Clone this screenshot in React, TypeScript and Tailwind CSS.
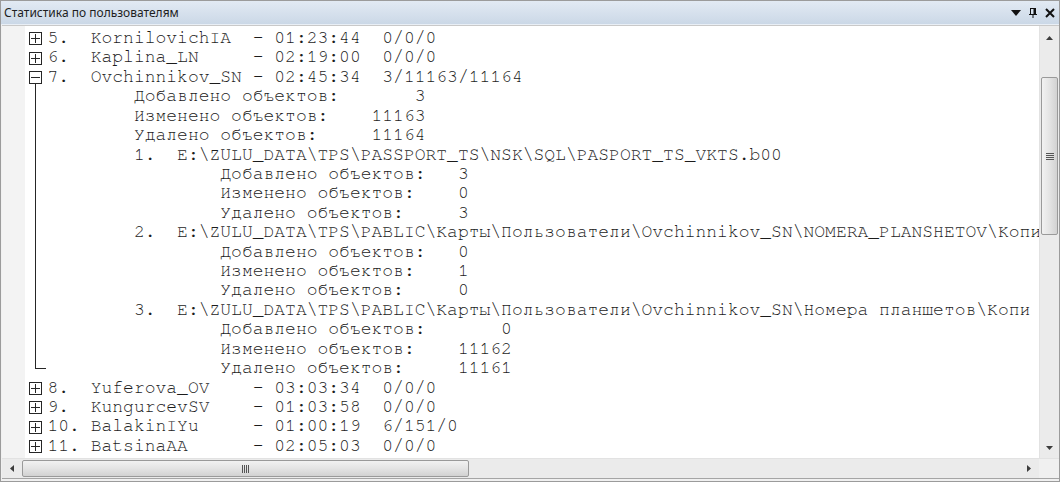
import React from "react";

function pad(label: string, value: string, width: number, indent: number) {
  return " ".repeat(indent) + label.padEnd(22, " ") + value.padStart(width, " ");
}

function head(num: string, name: string, time: string, stats: string) {
  return (num + ".").padEnd(4, " ") + name.padEnd(14, " ") + " - " + time + "  " + stats;
}

function Box({ open }: { open: boolean }) {
  return (
    <span className="relative block w-[13px] h-[13px] border border-[#262626] bg-white">
      <span className="absolute left-[1px] right-[1px] top-[5px] h-px bg-[#262626]" />
      {!open && <span className="absolute top-[1px] bottom-[1px] left-[5px] w-px bg-[#262626]" />}
    </span>
  );
}

function Row({ children, box }: { children: React.ReactNode; box?: React.ReactNode }) {
  return (
    <div className="flex h-[19.43px] items-center">
      <div className="w-[22.5px] shrink-0 flex items-center pl-[4px]">{box}</div>
      <span className="whitespace-pre">{children}</span>
    </div>
  );
}

const before = [
  head("5", "KornilovichIA", "01:23:44", "0/0/0"),
  head("6", "Kaplina_LN", "02:19:00", "0/0/0"),
];

const after = [
  head("8", "Yuferova_OV", "03:03:34", "0/0/0"),
  head("9", "KungurcevSV", "01:03:58", "0/0/0"),
  head("10", "BalakinIYu", "01:00:19", "6/151/0"),
  head("11", "BatsinaAA", "02:05:03", "0/0/0"),
];

const children: string[] = [
  pad("Добавлено объектов:", "3", 5, 8),
  pad("Изменено объектов:", "11163", 5, 8),
  pad("Удалено объектов:", "11164", 5, 8),
  "        1.  E:\\ZULU_DATA\\TPS\\PASSPORT_TS\\NSK\\SQL\\PASPORT_TS_VKTS.b00",
  pad("Добавлено объектов:", "3", 1, 16),
  pad("Изменено объектов:", "0", 1, 16),
  pad("Удалено объектов:", "3", 1, 16),
  "        2.  E:\\ZULU_DATA\\TPS\\PABLIC\\Карты\\Пользователи\\Ovchinnikov_SN\\NOMERA_PLANSHETOV\\Копи",
  pad("Добавлено объектов:", "0", 1, 16),
  pad("Изменено объектов:", "1", 1, 16),
  pad("Удалено объектов:", "0", 1, 16),
  "        3.  E:\\ZULU_DATA\\TPS\\PABLIC\\Карты\\Пользователи\\Ovchinnikov_SN\\Номера планшетов\\Копи",
  pad("Добавлено объектов:", "0", 5, 16),
  pad("Изменено объектов:", "11162", 5, 16),
  pad("Удалено объектов:", "11161", 5, 16),
];

function Tri({ dir }: { dir: "up" | "down" | "left" | "right" }) {
  const pts =
    dir === "up" ? "0,4 3.5,0 7,4" : dir === "down" ? "0,0 7,0 3.5,4" : dir === "left" ? "4,0 4,7 0,3.5" : "0,0 4,3.5 0,7";
  const w = dir === "up" || dir === "down" ? 7 : 4;
  const h = dir === "up" || dir === "down" ? 4 : 7;
  return (
    <svg width={w} height={h} viewBox={`0 0 ${w} ${h}`}>
      <polygon points={pts} fill="#3c3c3c" />
    </svg>
  );
}

export default function App() {
  return (
    <div className="w-[1060px] h-[482px] bg-[#f0f0f0] border border-[#9b9b9b] flex flex-col overflow-hidden">
      {/* title bar */}
      <div className="h-[24px] shrink-0 flex items-center justify-between pl-[3px] pr-[4px] bg-gradient-to-b from-[#e2eaf3] to-[#cbd8e7] border-b border-[#e9eff6] font-['Noto_Sans','Liberation_Sans',sans-serif] text-[12px] text-[#1e1e1e]">
        <span className="leading-none">Статистика по пользователям</span>
        <div className="flex items-center gap-[8px]">
          <svg width="10" height="6" viewBox="0 0 10 6">
            <polygon points="0,0 10,0 5,6" fill="#111" />
          </svg>
          <svg width="8" height="10" viewBox="0 0 8 10">
            <rect x="1.5" y="0.5" width="5" height="6" fill="none" stroke="#111" />
            <rect x="4.5" y="0.5" width="2" height="6" fill="#111" />
            <rect x="0" y="6" width="8" height="1" fill="#111" />
            <rect x="3.5" y="7" width="1" height="3" fill="#111" />
          </svg>
          <svg width="10" height="10" viewBox="0 0 10 10">
            <path d="M1 1 L9 9 M9 1 L1 9" stroke="#111" strokeWidth="2" />
          </svg>
        </div>
      </div>
      {/* body */}
      <div className="flex-1 flex flex-col min-h-0 border-t border-[#c9c9c9] ml-[1px]">
        <div className="flex-1 flex min-h-0">
          <div className="w-[23px] shrink-0 bg-[#f3f3f3]" />
          <div className="flex-1 bg-white overflow-hidden pt-[3px] font-['Nimbus_Mono_PS','Nimbus_Mono_L','FreeMono','Courier_New','Liberation_Mono',monospace] text-[18px] text-[#1c1c1c] leading-[19.43px]">
            {before.map((t) => (
              <Row key={t} box={<Box open={false} />}>
                {t}
              </Row>
            ))}
            <Row box={<Box open={true} />}>{head("7", "Ovchinnikov_SN", "02:45:34", "3/11163/11164")}</Row>
            <div className="relative">
              <span className="absolute left-[10px] top-[-3px] bottom-[9.7px] w-[11px] border-l border-b border-[#262626]" />
              {children.map((t, i) => (
                <Row key={i}>{t}</Row>
              ))}
            </div>
            {after.map((t) => (
              <Row key={t} box={<Box open={false} />}>
                {t}
              </Row>
            ))}
          </div>
          {/* vertical scrollbar */}
          <div className="w-[20px] shrink-0 bg-[#ebebeb] border-l border-[#e2e2e2] flex flex-col items-center">
            <div className="h-[20px] flex items-center justify-center mt-[2px]">
              <Tri dir="up" />
            </div>
            <div className="h-[29px]" />
            <div className="w-[17px] h-[158px] rounded-[2px] border border-[#9a9a9a] bg-gradient-to-r from-[#f2f2f2] via-[#e4e4e4] to-[#d2d2d2] flex flex-col items-center justify-center gap-[1px]">
              <span className="w-[8px] h-px bg-[#555]" />
              <span className="w-[8px] h-px bg-[#555]" />
              <span className="w-[8px] h-px bg-[#555]" />
              <span className="w-[8px] h-px bg-[#555]" />
            </div>
            <div className="flex-1" />
            <div className="h-[20px] flex items-center justify-center">
              <Tri dir="down" />
            </div>
          </div>
        </div>
        {/* horizontal scrollbar row */}
        <div className="h-[20px] shrink-0 flex bg-[#ebebeb] border-t border-[#e2e2e2]">
          <div className="w-[20px] flex items-center justify-center">
            <Tri dir="left" />
          </div>
          <div className="w-[447px] h-[17px] mt-[1px] rounded-[2px] border border-[#9a9a9a] bg-gradient-to-b from-[#f2f2f2] via-[#e4e4e4] to-[#d2d2d2] flex items-center justify-center gap-[1px]">
            <span className="w-px h-[8px] bg-[#555]" />
            <span className="w-px h-[8px] bg-[#555]" />
            <span className="w-px h-[8px] bg-[#555]" />
            <span className="w-px h-[8px] bg-[#555]" />
          </div>
          <div className="flex-1" />
          <div className="w-[20px] flex items-center justify-center">
            <Tri dir="right" />
          </div>
          <div className="w-[20px] bg-[#f0f0f0]" />
        </div>
        <div className="h-[3px] shrink-0 border-t border-[#a5a5a5] bg-[#f0f0f0]" />
      </div>
    </div>
  );
}
